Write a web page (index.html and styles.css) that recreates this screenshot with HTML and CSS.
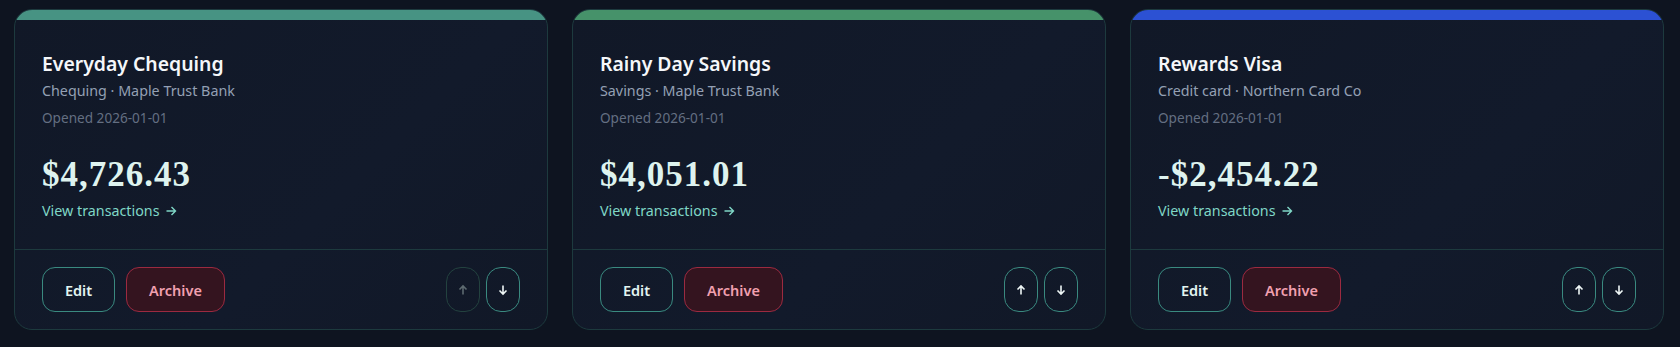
FILE: index.html
```html
<!DOCTYPE html>
<html>
<head>
    <title>Accounts</title>
    <link rel="stylesheet" href="styles.css">
</head>
<body>
    <div class="accounts">
        <div class="account-card">
            <div class="card-bar bar-chequing"></div>
            <div class="card-body">
                <div class="account-name">Everyday Chequing</div>
                <div class="account-meta">Chequing · Maple Trust Bank</div>
                <div class="account-opened">Opened 2026-01-01</div>
                <div class="account-balance">$4,726.43</div>
                <a class="view-link" href="#">View transactions <svg class="link-arrow" width="12" height="12" viewBox="0 0 12 12"><path d="M1.5 6h9M6.5 2l4 4-4 4"/></svg></a>
            </div>
            <div class="card-footer">
                <button class="btn btn-edit">Edit</button>
                <button class="btn btn-archive">Archive</button>
                <div class="move-buttons">
                    <button class="btn-move" disabled>
                        <svg width="12" height="12" viewBox="0 0 12 12"><path d="M6 10.5V2M2.5 5.5L6 2l3.5 3.5"/></svg>
                    </button>
                    <button class="btn-move">
                        <svg width="12" height="12" viewBox="0 0 12 12"><path d="M6 1.5V10M2.5 6.5L6 10l3.5-3.5"/></svg>
                    </button>
                </div>
            </div>
        </div>

        <div class="account-card">
            <div class="card-bar bar-savings"></div>
            <div class="card-body">
                <div class="account-name">Rainy Day Savings</div>
                <div class="account-meta">Savings · Maple Trust Bank</div>
                <div class="account-opened">Opened 2026-01-01</div>
                <div class="account-balance">$4,051.01</div>
                <a class="view-link" href="#">View transactions <svg class="link-arrow" width="12" height="12" viewBox="0 0 12 12"><path d="M1.5 6h9M6.5 2l4 4-4 4"/></svg></a>
            </div>
            <div class="card-footer">
                <button class="btn btn-edit">Edit</button>
                <button class="btn btn-archive">Archive</button>
                <div class="move-buttons">
                    <button class="btn-move">
                        <svg width="12" height="12" viewBox="0 0 12 12"><path d="M6 10.5V2M2.5 5.5L6 2l3.5 3.5"/></svg>
                    </button>
                    <button class="btn-move">
                        <svg width="12" height="12" viewBox="0 0 12 12"><path d="M6 1.5V10M2.5 6.5L6 10l3.5-3.5"/></svg>
                    </button>
                </div>
            </div>
        </div>

        <div class="account-card">
            <div class="card-bar bar-credit"></div>
            <div class="card-body">
                <div class="account-name">Rewards Visa</div>
                <div class="account-meta">Credit card · Northern Card Co</div>
                <div class="account-opened">Opened 2026-01-01</div>
                <div class="account-balance">-$2,454.22</div>
                <a class="view-link" href="#">View transactions <svg class="link-arrow" width="12" height="12" viewBox="0 0 12 12"><path d="M1.5 6h9M6.5 2l4 4-4 4"/></svg></a>
            </div>
            <div class="card-footer">
                <button class="btn btn-edit">Edit</button>
                <button class="btn btn-archive">Archive</button>
                <div class="move-buttons">
                    <button class="btn-move">
                        <svg width="12" height="12" viewBox="0 0 12 12"><path d="M6 10.5V2M2.5 5.5L6 2l3.5 3.5"/></svg>
                    </button>
                    <button class="btn-move">
                        <svg width="12" height="12" viewBox="0 0 12 12"><path d="M6 1.5V10M2.5 6.5L6 10l3.5-3.5"/></svg>
                    </button>
                </div>
            </div>
        </div>
    </div>
</body>
</html>
```

FILE: styles.css
```css
body {
    margin: 0;
    padding: 9px 16px 0 14px;
    background-color: #0e1420;
    font-family: "Noto Sans", sans-serif;
    color: #f1f5f9;
}
.accounts {
    display: grid;
    grid-template-columns: repeat(3, 1fr);
    gap: 24px;
}
.account-card {
    background: linear-gradient(135deg, #111827 0%, #121a2b 60%, #111827 100%);
    border: 1px solid #1d3a3e;
    border-radius: 18px;
    overflow: hidden;
}
.card-bar {
    height: 10px;
}
.bar-chequing {
    background-color: #479383;
}
.bar-savings {
    background-color: #46926a;
}
.bar-credit {
    background-color: #2c51d3;
}
.card-body {
    padding: 30px 27px 27px;
}
.account-name {
    font-size: 19.4px;
    line-height: 28px;
    font-weight: 600;
    color: #f5f7fa;
}
.account-meta {
    margin-top: 2px;
    font-size: 14.3px;
    line-height: 22px;
    color: #94a0b4;
}
.account-opened {
    margin-top: 6px;
    font-size: 13.6px;
    line-height: 20px;
    color: #646f82;
}
.account-balance {
    margin-top: 27px;
    font-family: "Liberation Serif", serif;
    font-size: 35px;
    line-height: 40px;
    font-weight: bold;
    letter-spacing: 1px;
    color: #def3ef;
}
.view-link {
    display: inline-flex;
    align-items: center;
    gap: 5px;
    margin-top: 5px;
    font-size: 14.3px;
    line-height: 22px;
    color: #7fd6c6;
    text-decoration: none;
}
.link-arrow {
    fill: none;
    stroke: #7fd6c6;
    stroke-width: 1.4;
}
.card-footer {
    display: flex;
    align-items: center;
    gap: 11px;
    padding: 17px 27px;
    border-top: 1px solid #1d3a3e;
}
.btn {
    height: 45px;
    padding: 0;
    border-radius: 13px;
    font-family: "Noto Sans", sans-serif;
    font-size: 14.5px;
    font-weight: 600;
    cursor: pointer;
}
.btn-edit {
    width: 73px;
    background: transparent;
    border: 1.5px solid #3a8a80;
    color: #e3f4f1;
}
.btn-archive {
    width: 99px;
    background-color: #34141f;
    border: 1.5px solid #9c2a40;
    color: #f1a0b0;
}
.move-buttons {
    display: flex;
    gap: 6px;
    margin-left: auto;
}
.btn-move {
    width: 34px;
    height: 45px;
    padding: 0;
    display: flex;
    align-items: center;
    justify-content: center;
    background: transparent;
    border: 1.5px solid #3a8a80;
    border-radius: 15px;
    cursor: pointer;
}
.btn-move svg {
    fill: none;
    stroke: #eef6f5;
    stroke-width: 1.6;
}
.btn-move:disabled {
    border-color: #23423f;
    cursor: default;
}
.btn-move:disabled svg {
    stroke: #5d6a70;
}
```
